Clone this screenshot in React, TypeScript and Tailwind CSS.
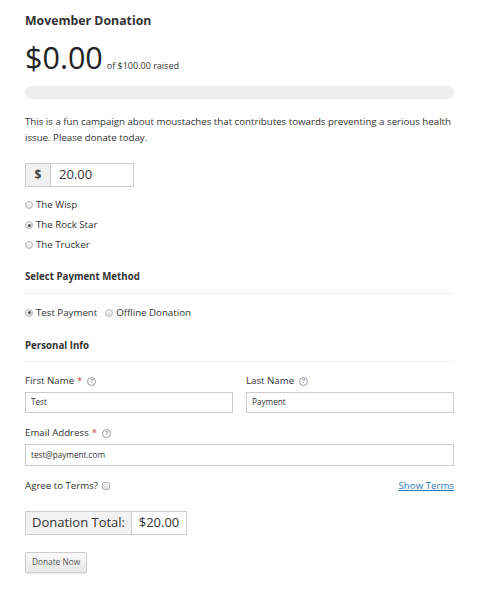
import React from 'react';

function Radio({ checked }: { checked?: boolean }) {
  return (
    <span className="inline-flex h-[8px] w-[8px] items-center justify-center rounded-full border border-[#b8b8b8] bg-gradient-to-b from-[#fafafa] to-[#dcdcdc]">
      {checked && <span className="h-[3px] w-[3px] rounded-full bg-[#555]" />}
    </span>
  );
}

function Help() {
  return (
    <span className="ml-[5px] inline-flex h-[9px] w-[9px] items-center justify-center rounded-full border border-[#999] text-[6px] font-bold leading-none text-[#999]">
      ?
    </span>
  );
}

function Required() {
  return <span className="ml-[3px] text-[#b94a48]">*</span>;
}

const levels = [
  { name: 'The Wisp', checked: false },
  { name: 'The Rock Star', checked: true },
  { name: 'The Trucker', checked: false },
];

export default function App() {
  return (
    <div className="min-h-[600px] w-[501px] bg-white px-[25px] pt-[12px] font-['Open_Sans',sans-serif] text-[#333]">
      <h2 className="text-[12.3px] font-bold leading-[18px] text-[#333]">Movember Donation</h2>

      <div className="mt-[9px] flex items-baseline">
        <span className="text-[30.5px] leading-[36px] text-[#222]">$0.00</span>
        <span className="ml-[4px] text-[9px] text-[#333]">of $100.00 raised</span>
      </div>

      <div className="mt-[11px] h-[13px] w-[429px] rounded-full bg-[#eeeeee]" />

      <p className="mt-[15px] text-[9.7px] leading-[16px] text-[#333]">
        This is a fun campaign about moustaches that contributes towards preventing a serious health issue.
        Please donate today.
      </p>

      <div className="mt-[17px] flex h-[24px] w-[109px] border border-[#cccccc]">
        <span className="flex w-[25px] items-center justify-center border-r border-[#cccccc] bg-[#f0f0f0] text-[12px] font-bold text-[#444]">
          $
        </span>
        <span className="flex items-center pl-[8px] text-[13px] text-[#333]">20.00</span>
      </div>

      <div className="mt-[10px] flex flex-col gap-[4px]">
        {levels.map((l) => (
          <label key={l.name} className="flex h-[16px] items-center gap-[3px] text-[9.7px] text-[#333]">
            <Radio checked={l.checked} />
            <span>{l.name}</span>
          </label>
        ))}
      </div>

      <h3 className="mt-[16px] text-[9.7px] font-bold leading-[16px]">Select Payment Method</h3>
      <div className="mt-[8px] h-px w-[429px] bg-[#eeeeee]" />

      <div className="mt-[11px] flex h-[16px] items-center text-[9.7px]">
        <label className="flex items-center gap-[3px]">
          <Radio checked />
          <span>Test Payment</span>
        </label>
        <label className="ml-[8px] flex items-center gap-[3px]">
          <Radio />
          <span>Offline Donation</span>
        </label>
      </div>

      <h3 className="mt-[17px] text-[9.7px] font-bold leading-[16px]">Personal Info</h3>
      <div className="mt-[7px] h-px w-[429px] bg-[#eeeeee]" />

      <div className="mt-[11px] flex gap-[13px]">
        <div className="w-[208px]">
          <div className="flex h-[16px] items-center text-[9.7px]">
            First Name
            <Required />
            <Help />
          </div>
          <div className="mt-[3px] flex h-[21px] items-center border border-[#cccccc] px-[5px] text-[8.2px] text-[#333]">
            Test
          </div>
        </div>
        <div className="w-[208px]">
          <div className="flex h-[16px] items-center text-[9.7px]">
            Last Name
            <Help />
          </div>
          <div className="mt-[3px] flex h-[21px] items-center border border-[#cccccc] px-[5px] text-[8.2px] text-[#333]">
            Payment
          </div>
        </div>
      </div>

      <div className="mt-[12px]">
        <div className="flex h-[16px] items-center text-[9.7px]">
          Email Address
          <Required />
          <Help />
        </div>
        <div className="mt-[3px] flex h-[22px] w-[429px] items-center border border-[#cccccc] px-[5px] text-[8.2px] text-[#333]">
          test@payment.com
        </div>
      </div>

      <div className="mt-[12px] flex h-[16px] w-[429px] items-center justify-between text-[9.7px]">
        <label className="flex items-center gap-[4px]">
          <span>Agree to Terms?</span>
          <span className="h-[8px] w-[8px] rounded-[2px] border border-[#b8b8b8] bg-gradient-to-b from-[#fafafa] to-[#dcdcdc]" />
        </label>
        <a className="text-[#2a77b4] underline">Show Terms</a>
      </div>

      <div className="mt-[17px] flex h-[24px] w-[162px] border border-[#cccccc] text-[13px]">
        <span className="flex w-[106px] items-center justify-center border-r border-[#cccccc] bg-[#f2f2f2] text-[#333]">
          Donation Total:
        </span>
        <span className="flex flex-1 items-center justify-center bg-white text-[#333]">$20.00</span>
      </div>

      <button className="mt-[17px] flex h-[21px] w-[62px] items-center justify-center rounded-[2px] border border-[#cccccc] bg-gradient-to-b from-[#fafafa] to-[#e8e8e8] text-[8.3px] text-[#555] shadow-[0_1px_1px_rgba(0,0,0,0.08)]">
        Donate Now
      </button>
    </div>
  );
}
